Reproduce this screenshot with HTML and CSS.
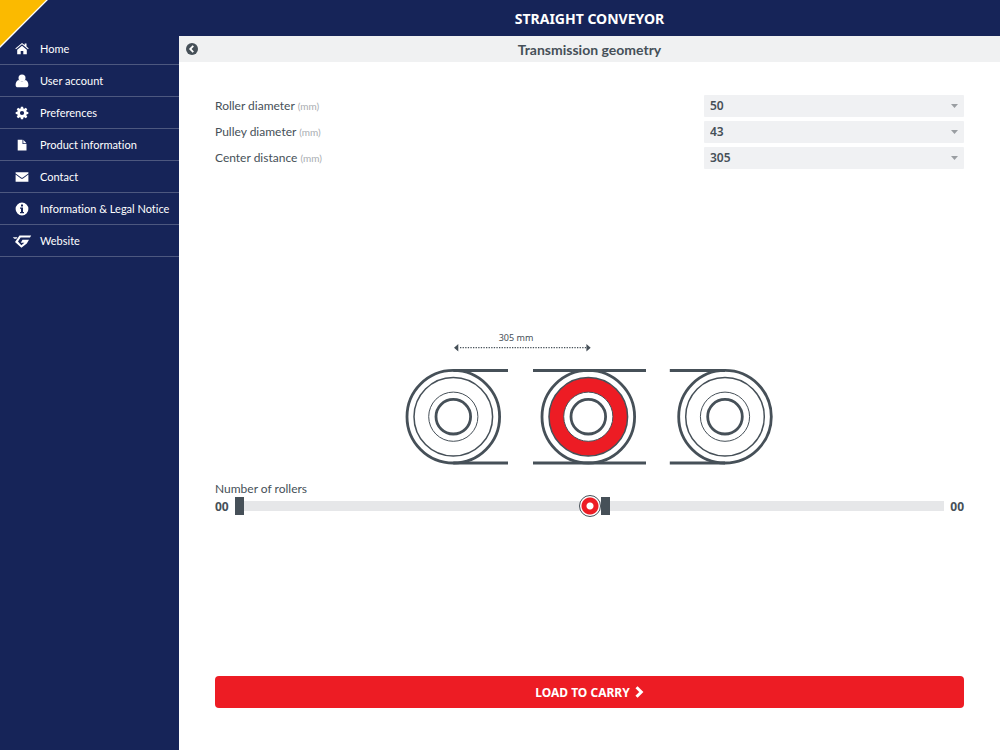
FILE: index.html
```html
<!DOCTYPE html>
<html lang="en">
<head>
    <meta charset="UTF-8">
    <meta name="viewport" content="width=device-width, initial-scale=1.0">
    <title>Straight Conveyor</title>
    <link rel="stylesheet" href="styles.css">
</head>
<body>
    <div class="corner">
        <svg width="48" height="48" viewBox="0 0 48 48" aria-hidden="true">
            <path d="M0 0H47L0 47z" fill="#fbba00"/>
            <path d="M47.500 -.5L-.5 47.500" stroke="#fff" stroke-width="1.300"/>
        </svg>
    </div>

    <nav class="sidebar">
        <ul>
            <li><a href="#home">
                <svg class="icon" viewBox="0 0 14 14"><path d="M7 3.700L2.200 7.700V12.300H5.700V8.900H8.300V12.300H11.800V7.700z"/><path d="M7 .9L.3 6.500L1 7.300L7 2.300L13 7.300L13.700 6.500L11.500 4.600V1.600H9.700V3.100z"/></svg>
                Home</a></li>
            <li><a href="#account">
                <svg class="icon" viewBox="0 0 14 14"><circle cx="7" cy="4" r="3.500"/><path d="M4 6.100C1.600 6.400 .6 8.600 .6 11C.6 12.500 1.500 13.300 2.800 13.300H11.200C12.500 13.300 13.400 12.500 13.400 11C13.400 8.600 12.400 6.400 10 6.100C8.300 8 5.700 8 4 6.100z"/></svg>
                User account</a></li>
            <li><a href="#preferences">
                <svg class="icon" viewBox="0 0 14 14"><path fill-rule="evenodd" d="M5.900 .7H8.100L8.400 2.400L9.400 2.800L10.800 1.800L12.300 3.300L11.300 4.700L11.700 5.700L13.300 6V8L11.700 8.300L11.300 9.300L12.300 10.700L10.800 12.200L9.400 11.200L8.400 11.600L8.100 13.300H5.900L5.600 11.600L4.600 11.200L3.200 12.200L1.700 10.700L2.700 9.300L2.300 8.300L.7 8V6L2.300 5.700L2.700 4.700L1.700 3.300L3.200 1.800L4.600 2.800L5.600 2.400zM7 4.900A2.100 2.100 0 1 0 7 9.100A2.100 2.100 0 1 0 7 4.900z"/></svg>
                Preferences</a></li>
            <li><a href="#products">
                <svg class="icon" viewBox="0 0 14 14"><path d="M2.700 1.700H7.500V6H11.500V12.500H2.700z"/><path d="M8.300 1.700L11.500 5.200H8.300z"/></svg>
                Product information</a></li>
            <li><a href="#contact">
                <svg class="icon" viewBox="0 0 14 14"><path d="M.6 2.200H13.400V3.400L7.900 7.400Q7 8 6.100 7.400L.6 3.400z"/><path d="M.6 4.500L5.600 8.200Q7 9.200 8.400 8.200L13.400 4.500V11.800H.6z"/></svg>
                Contact</a></li>
            <li><a href="#legal">
                <svg class="icon" viewBox="0 0 14 14"><path fill-rule="evenodd" d="M7 .6A6.400 6.400 0 1 0 7 13.400A6.400 6.400 0 1 0 7 .6zM6 2.500H8V4.400H6zM5 5.400H8V9.900H9V11.200H5V9.900H6V6.700H5z"/></svg>
                Information &amp; Legal Notice</a></li>
            <li><a href="#website">
                <svg class="icon icon-wide" viewBox="0 0 20 14"><path d="M.8 3.200H5.500L4.300 4.800H2.300z"/><path d="M7.500 1.500H19.200L18 3.600H8.600L6 7.400L9.300 11.200L12.400 8.700H8.800L10.500 5.800H17L14.800 9.400L9.400 13.800L3 8z"/></svg>
                Website</a></li>
        </ul>
    </nav>

    <div class="page">
        <header class="title-bar">
            <h1>STRAIGHT CONVEYOR</h1>
        </header>
        <div class="sub-bar">
            <button class="back-btn" type="button" aria-label="Back">
                <svg width="12" height="12" viewBox="0 0 12 12"><circle cx="6" cy="6" r="6" fill="#465058"/><path d="M7.300 2.900L4.200 6L7.300 9.100" fill="none" stroke="#fff" stroke-width="1.800"/></svg>
            </button>
            <h2>Transmission geometry</h2>
        </div>

        <main class="content">
            <form class="geometry">
                <div class="field">
                    <label for="rollerDiameter">Roller diameter <small>(mm)</small></label>
                    <select id="rollerDiameter"><option>50</option></select>
                </div>
                <div class="field">
                    <label for="pulleyDiameter">Pulley diameter <small>(mm)</small></label>
                    <select id="pulleyDiameter"><option>43</option></select>
                </div>
                <div class="field">
                    <label for="centerDistance">Center distance <small>(mm)</small></label>
                    <select id="centerDistance"><option>305</option></select>
                </div>
            </form>

            <svg class="drawing" width="369" height="134" viewBox="405 332 369 134" role="img" aria-label="Rollers, center distance 305 mm">
                <!-- center distance -->
                <text x="516" y="341" text-anchor="middle">305 mm</text>
                <path d="M460 347.700H586" stroke="#465058" stroke-width="1.300" stroke-dasharray="1.300 1.300"/>
                <path d="M454 347.700L458.300 344V351.400zM590.700 347.700L586.400 344V351.400z" fill="#465058"/>

                <!-- belts -->
                <g class="belt">
                    <path d="M453.300 370.500H508M453.300 463H508"/>
                    <path d="M533 370.500H646M533 463H646"/>
                    <path d="M669.800 370.500H725M669.800 463H725"/>
                </g>

                <!-- rollers -->
                <g class="roller">
                    <circle cx="453.300" cy="416.700" r="46.300" stroke-width="2.800"/>
                    <circle cx="453.300" cy="416.700" r="39.300" stroke-width="1.500"/>
                    <circle cx="453.300" cy="416.700" r="24.600" stroke-width="1"/>
                    <circle cx="453.300" cy="416.700" r="17.300" stroke-width="2.800"/>
                </g>
                <g class="roller">
                    <circle cx="588.300" cy="416.700" r="46.300" stroke-width="2.800"/>
                    <circle class="driven" cx="588.300" cy="416.700" r="39.300" stroke-width="1.500"/>
                    <circle class="hub" cx="588.300" cy="416.700" r="24.600" stroke-width="1"/>
                    <circle cx="588.300" cy="416.700" r="17.300" stroke-width="2.800"/>
                </g>
                <g class="roller">
                    <circle cx="725" cy="416.700" r="46.300" stroke-width="2.800"/>
                    <circle cx="725" cy="416.700" r="39.300" stroke-width="1.500"/>
                    <circle cx="725" cy="416.700" r="24.600" stroke-width="1"/>
                    <circle cx="725" cy="416.700" r="17.300" stroke-width="2.800"/>
                </g>
            </svg>

            <div class="rollers">
                <label for="driveRoller">Number of rollers</label>
                <div class="slider-row">
                    <output>00</output>
                    <div class="slider">
                        <input type="range" class="stop" min="0" max="44" value="0" aria-label="Rollers before the drive">
                        <input type="range" class="stop" min="0" max="44" value="23" aria-label="Rollers after the drive">
                        <input type="range" class="drive" id="driveRoller" min="0" max="44" value="22">
                    </div>
                    <output>00</output>
                </div>
            </div>

            <button class="load-btn" type="button">
                LOAD TO CARRY
                <svg width="9" height="12" viewBox="0 0 9 12" aria-hidden="true"><path d="M1.500 1.200L6.300 6L1.500 10.800" fill="none" stroke="#fff" stroke-width="3"/></svg>
            </button>
        </main>
    </div>
</body>
</html>
```
FILE: styles.css
```css
* {
    box-sizing: border-box;
}

body {
    display: flex;
    min-height: 100vh;
    margin: 0;
    font-family: Lato, "Noto Sans", sans-serif;
    font-size: 11px;
    font-variant-ligatures: none;
    color: #465058;
    background: #fff;
}

h1, h2 {
    margin: 0;
}

button, select {
    border: none;
    cursor: pointer;
}

/* Yellow corner over the sidebar */
.corner {
    position: absolute;
    top: 0;
    left: 0;
}

.corner svg {
    display: block;
}

.sidebar {
    flex: 0 0 179px;
    padding-top: 33px;
    background: #162458;
}

.sidebar ul {
    margin: 0;
    padding: 0;
    list-style: none;
}

.sidebar a {
    display: flex;
    align-items: center;
    gap: 11px;
    height: 32px;
    padding-left: 15px;
    border-bottom: 1px solid #4d587f;
    color: #fff;
    font-size: 11px;
    text-decoration: none;
    white-space: nowrap;
}

.icon {
    width: 14px;
    height: 14px;
    fill: #fff;
}

.icon-wide {
    width: 20px;
    margin: 0 -3px;
}

.page {
    flex: 1;
    display: flex;
    flex-direction: column;
    min-width: 0;
}

.title-bar {
    display: flex;
    align-items: center;
    justify-content: center;
    height: 36px;
    background: #162458;
    color: #fff;
}

.title-bar h1 {
    font-family: "Noto Sans", sans-serif;
    font-size: 14px;
}

.sub-bar {
    display: grid;
    grid-template-columns: 12px 1fr 12px;
    align-items: center;
    height: 26px;
    padding: 0 7px;
    background: #f0f1f2;
}

.sub-bar h2 {
    font-size: 14px;
    font-weight: 700;
    text-align: center;
}

.back-btn {
    display: flex;
    padding: 0;
    background: none;
}

.content {
    flex: 1;
    display: flex;
    flex-direction: column;
    padding: 33px 36px 42px;
}

.geometry {
    display: grid;
    gap: 4px;
}

.field {
    display: grid;
    grid-template-columns: 1fr 260px;
    align-items: center;
}

.field label,
.rollers label {
    font-size: 12px;
}

.field label {
    padding-bottom: 2px;
}

.field small {
    font-size: 10px;
    color: #a9adb1;
}

.field select {
    height: 22px;
    padding: 0 6px 2px;
    appearance: none;
    border-radius: 1px;
    background: #f0f1f3 url("data:image/svg+xml,%3Csvg xmlns='http://www.w3.org/2000/svg' width='7' height='4'%3E%3Cpath d='M0 0H7L3.500 4z' fill='%239a9ea2'/%3E%3C/svg%3E") no-repeat right 6px center;
    color: #465058;
    font-family: "Noto Sans", sans-serif;
    font-size: 12px;
    font-weight: 600;
}

.drawing {
    align-self: center;
    max-width: 100%;
    margin-top: 163px;
}

.drawing text {
    font-family: "Noto Sans", sans-serif;
    font-size: 9px;
    fill: #465058;
}

.belt {
    stroke: #465058;
    stroke-width: 3;
}

.roller circle {
    fill: none;
    stroke: #465058;
}

.roller .driven {
    fill: #ed1c24;
}

.roller .hub {
    fill: #fff;
}

.rollers {
    margin-top: 15px;
}

.rollers label {
    display: block;
    line-height: 16px;
}

.slider-row {
    display: flex;
    align-items: center;
    gap: 6px;
    height: 18px;
}

.slider-row output {
    font-family: "Noto Sans", sans-serif;
    font-size: 12px;
    font-weight: 700;
}

/* Three handles share one track */
.slider {
    flex: 1;
    display: grid;
    align-items: center;
    background: linear-gradient(#e6e7e9, #e6e7e9) no-repeat center / 100% 10px;
}

.slider input {
    grid-area: 1 / 1;
    width: 100%;
    height: 22px;
    margin: 0;
    appearance: none;
    background: none;
    pointer-events: none;
}

.slider input::-webkit-slider-thumb {
    appearance: none;
    pointer-events: auto;
    cursor: pointer;
}

.stop::-webkit-slider-thumb {
    width: 9px;
    height: 18px;
    background: #465058;
}

.drive::-webkit-slider-thumb {
    width: 22px;
    height: 22px;
    border: 1px solid #465058;
    border-radius: 50%;
    background: radial-gradient(circle, #fff 3px, #ed1c24 4px, #ed1c24 8px, #fff 9px);
}

.load-btn {
    display: flex;
    align-items: center;
    justify-content: center;
    gap: 5px;
    height: 32px;
    margin-top: auto;
    border-radius: 4px;
    background: #ed1c24;
    color: #fff;
    font-family: "Noto Sans", sans-serif;
    font-size: 12px;
    font-weight: 700;
}
```
